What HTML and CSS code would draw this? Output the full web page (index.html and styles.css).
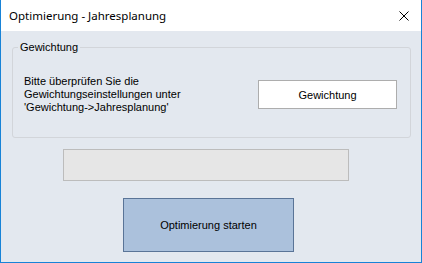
FILE: index.html
```html
<!DOCTYPE html>
<html lang="de">
<head>
    <meta charset="UTF-8">
    <meta name="viewport" content="width=device-width, initial-scale=1.0">
    <title>Optimierung - Jahresplanung</title>
    <link rel="stylesheet" href="styles.css">
</head>
<body>
    <div class="window">
        <div class="titlebar">
            <span class="title">Optimierung - Jahresplanung</span>
            <button class="close" type="button" aria-label="Schließen">
                <svg width="10" height="10" viewBox="0 0 10 10">
                    <path d="M0.5 0.5 L9.5 9.5 M9.5 0.5 L0.5 9.5" stroke="#000" stroke-width="1" fill="none"/>
                </svg>
            </button>
        </div>
        <div class="content">
            <fieldset class="group">
                <legend>Gewichtung</legend>
                <div class="group-row">
                    <p class="hint">Bitte überprüfen Sie die<br>Gewichtungseinstellungen unter<br>'Gewichtung-&gt;Jahresplanung'</p>
                    <button class="btn" type="button">Gewichtung</button>
                </div>
            </fieldset>
            <div class="progress"></div>
            <button class="btn-start" type="button">Optimierung starten</button>
        </div>
    </div>
</body>
</html>
```

FILE: styles.css
```css
body {
    margin: 0;
    padding: 0;
    font-family: 'Liberation Sans', Arial, sans-serif;
    font-size: 11px;
    color: #000;
}
.window {
    width: 422px;
    height: 263px;
    box-sizing: border-box;
    border: 1px solid #1883d7;
    border-top: none;
    background-color: #e3e8ef;
    display: flex;
    flex-direction: column;
}
.titlebar {
    height: 31px;
    background-color: #fff;
    display: flex;
    align-items: center;
    justify-content: space-between;
}
.title {
    font-family: 'Noto Sans', sans-serif;
    font-size: 11.5px;
    padding-left: 8px;
    padding-bottom: 1px;
}
.close {
    width: 34px;
    height: 31px;
    border: none;
    background: none;
    padding: 0;
    display: flex;
    align-items: center;
    justify-content: center;
}
.content {
    display: flex;
    flex-direction: column;
    align-items: flex-start;
}
.group {
    margin: 10px 10px 0 11px;
    width: 399px;
    box-sizing: border-box;
    padding: 0 0 0 5px;
    border: 1px solid #d2d5da;
    border-radius: 3px;
    min-width: 0;
}
.group legend {
    padding: 0 2px;
    line-height: 13px;
}
.group-row {
    display: flex;
    align-items: center;
    justify-content: space-between;
    padding: 21px 13px 23px 6px;
}
.hint {
    margin: 0;
    line-height: 13px;
}
.btn {
    width: 139px;
    height: 29px;
    background-color: #fff;
    border: 1px solid #adadad;
    font-family: inherit;
    font-size: 11px;
    padding: 0;
}
.progress {
    margin: 11px 0 0 62px;
    width: 286px;
    height: 32px;
    box-sizing: border-box;
    background-color: #e6e6e6;
    border: 1px solid #bcbcbc;
}
.btn-start {
    margin: 17px 0 0 122px;
    width: 171px;
    height: 54px;
    background-color: #abc1dc;
    border: 1px solid #5a7497;
    font-family: inherit;
    font-size: 11px;
    padding: 0;
}
```
